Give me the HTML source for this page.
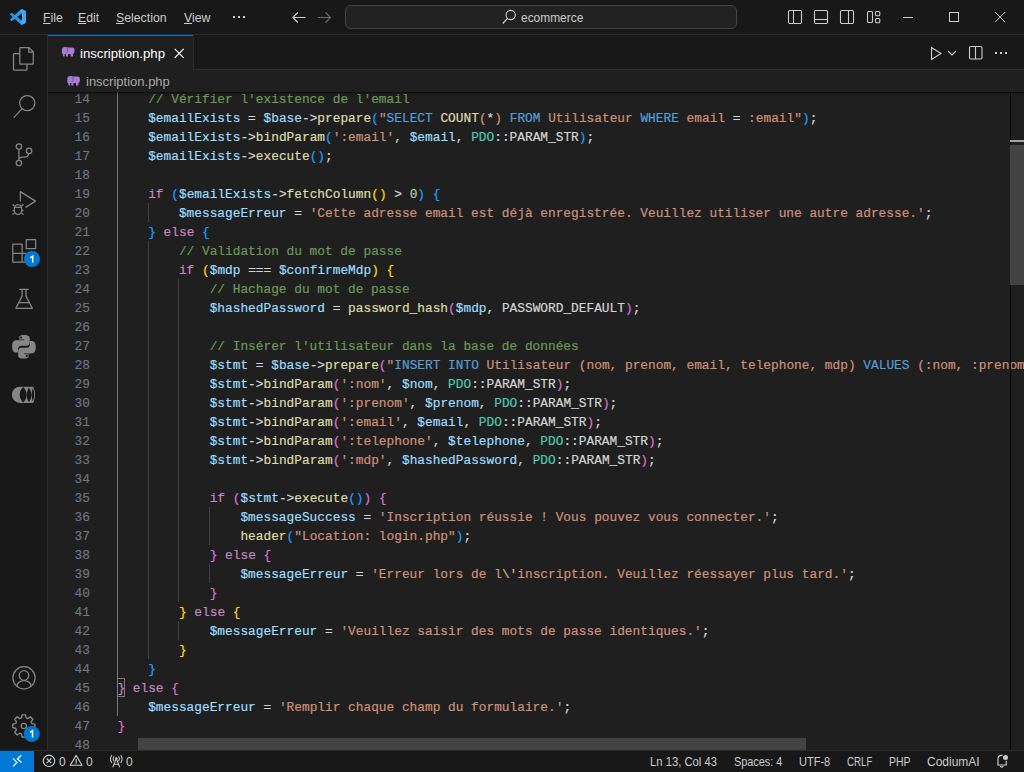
<!DOCTYPE html>
<html><head><meta charset="utf-8"><style>
*{margin:0;padding:0;box-sizing:border-box}
html,body{width:1024px;height:772px;overflow:hidden;background:#1f1f1f;font-family:"Liberation Sans",sans-serif}
.a{position:absolute}
.menu{position:absolute;top:11px;font-size:12.3px;color:#cccccc;line-height:14px;white-space:nowrap}
.menu i{font-style:normal;text-decoration:underline;text-underline-offset:1px}
.st{position:absolute;top:755px;font-size:12px;color:#cccccc;line-height:14px;white-space:nowrap}
.ln{position:absolute;left:0;width:42px;-webkit-text-stroke:0.15px currentColor;text-align:right;font-family:"Liberation Mono",monospace;font-size:12.82px;color:#6e7681;height:19px;line-height:19px;padding-top:1px}
.cl{position:absolute;white-space:pre;-webkit-text-stroke:0.2px currentColor;font-family:"Liberation Mono",monospace;font-size:12.82px;color:#d4d4d4;height:19px;line-height:19px;padding-top:1px}
.c{color:#6a9955}.v{color:#9cdcfe}.f{color:#dcdcaa}.k{color:#c586c0}.s{color:#ce9178}.q{color:#569cd6}.t{color:#4ec9b0}.n{color:#b5cea8}.e{color:#d7ba7d}
.b1{color:#ffd700}.b2{color:#da70d6}.b3{color:#179fff}
</style></head><body>
<div class="a" style="left:0;top:0;width:1024px;height:34px;background:#181818"></div>
<div class="a" style="left:0;top:34px;width:1024px;height:1px;background:#2b2b2b"></div>
<div class="a" style="left:0;top:35px;width:47px;height:715px;background:#181818"></div>
<div class="a" style="left:47px;top:35px;width:1px;height:715px;background:#2b2b2b"></div>
<div class="a" style="left:48px;top:35px;width:976px;height:34px;background:#181818"></div>
<div class="a" style="left:48px;top:69px;width:976px;height:1px;background:#2b2b2b"></div>
<div class="a" style="left:48px;top:35px;width:145px;height:35px;background:#1f1f1f"></div>
<div class="a" style="left:48px;top:35px;width:145px;height:1px;background:#0078d4"></div>
<div class="a" style="left:193px;top:35px;width:1px;height:35px;background:#2b2b2b"></div>
<div class="a" style="left:0;top:750px;width:1024px;height:22px;background:#181818"></div>
<div class="a" style="left:0;top:750px;width:1024px;height:1px;background:#2b2b2b"></div>
<div class="a" style="left:0;top:751px;width:34px;height:21px;background:#0078d4"></div>
<div class="a" style="left:48px;top:92px;width:976px;height:658px;overflow:hidden">
<div class="a" style="left:69.00px;top:-3px;width:1px;height:589px;background:#777777"></div>
<div class="a" style="left:69.00px;top:605px;width:1px;height:19px;background:#777777"></div>
<div class="a" style="left:100.00px;top:111px;width:1px;height:19px;background:#404040"></div>
<div class="a" style="left:100.00px;top:149px;width:1px;height:418px;background:#404040"></div>
<div class="a" style="left:130.00px;top:187px;width:1px;height:323px;background:#404040"></div>
<div class="a" style="left:130.00px;top:529px;width:1px;height:19px;background:#404040"></div>
<div class="a" style="left:161.00px;top:415px;width:1px;height:38px;background:#404040"></div>
<div class="a" style="left:161.00px;top:472px;width:1px;height:19px;background:#404040"></div>
<div class="a" style="left:69.40px;top:586px;width:8px;height:19px;border:1px solid #7a7a7a;background:rgba(0,100,0,0.1)"></div>
<div class="ln" style="top:-3px">14</div>
<div class="cl" style="left:69.40px;top:-3px">    <span class="c">// Vérifier l'existence de l'email</span></div>
<div class="ln" style="top:16px">15</div>
<div class="cl" style="left:69.40px;top:16px">    <span class="v">$emailExists</span> = <span class="v">$base</span>-&gt;<span class="f">prepare</span><span class="b3">(</span><span class="s">"</span><span class="q">SELECT</span><span class="s"> </span><span class="f">COUNT</span><span class="s">(</span>*<span class="s">)</span><span class="s"> </span><span class="q">FROM</span><span class="s"> Utilisateur </span><span class="q">WHERE</span><span class="s"> email </span>=<span class="s"> :email"</span><span class="b3">)</span>;</div>
<div class="ln" style="top:35px">16</div>
<div class="cl" style="left:69.40px;top:35px">    <span class="v">$emailExists</span>-&gt;<span class="f">bindParam</span><span class="b3">(</span><span class="s">':email'</span>, <span class="v">$email</span>, <span class="t">PDO</span>::PARAM_STR<span class="b3">)</span>;</div>
<div class="ln" style="top:54px">17</div>
<div class="cl" style="left:69.40px;top:54px">    <span class="v">$emailExists</span>-&gt;<span class="f">execute</span><span class="b3">()</span>;</div>
<div class="ln" style="top:73px">18</div>
<div class="ln" style="top:92px">19</div>
<div class="cl" style="left:69.40px;top:92px">    <span class="k">if</span> <span class="b3">(</span><span class="v">$emailExists</span>-&gt;<span class="f">fetchColumn</span><span class="b1">()</span> &gt; <span class="n">0</span><span class="b3">)</span> <span class="b3">{</span></div>
<div class="ln" style="top:111px">20</div>
<div class="cl" style="left:69.40px;top:111px">        <span class="v">$messageErreur</span> = <span class="s">'Cette adresse email est déjà enregistrée. Veuillez utiliser une autre adresse.'</span>;</div>
<div class="ln" style="top:130px">21</div>
<div class="cl" style="left:69.40px;top:130px">    <span class="b3">}</span> <span class="k">else</span> <span class="b3">{</span></div>
<div class="ln" style="top:149px">22</div>
<div class="cl" style="left:69.40px;top:149px">        <span class="c">// Validation du mot de passe</span></div>
<div class="ln" style="top:168px">23</div>
<div class="cl" style="left:69.40px;top:168px">        <span class="k">if</span> <span class="b1">(</span><span class="v">$mdp</span> === <span class="v">$confirmeMdp</span><span class="b1">)</span> <span class="b1">{</span></div>
<div class="ln" style="top:187px">24</div>
<div class="cl" style="left:69.40px;top:187px">            <span class="c">// Hachage du mot de passe</span></div>
<div class="ln" style="top:206px">25</div>
<div class="cl" style="left:69.40px;top:206px">            <span class="v">$hashedPassword</span> = <span class="f">password_hash</span><span class="b2">(</span><span class="v">$mdp</span>, PASSWORD_DEFAULT<span class="b2">)</span>;</div>
<div class="ln" style="top:225px">26</div>
<div class="ln" style="top:244px">27</div>
<div class="cl" style="left:69.40px;top:244px">            <span class="c">// Insérer l'utilisateur dans la base de données</span></div>
<div class="ln" style="top:263px">28</div>
<div class="cl" style="left:69.40px;top:263px">            <span class="v">$stmt</span> = <span class="v">$base</span>-&gt;<span class="f">prepare</span><span class="b2">(</span><span class="s">"</span><span class="q">INSERT</span><span class="s"> </span><span class="q">INTO</span><span class="s"> Utilisateur (nom, prenom, email, telephone, mdp) </span><span class="q">VALUES</span><span class="s"> (:nom, :prenom, :email, :telephone, :mdp)"</span><span class="b2">)</span>;</div>
<div class="ln" style="top:282px">29</div>
<div class="cl" style="left:69.40px;top:282px">            <span class="v">$stmt</span>-&gt;<span class="f">bindParam</span><span class="b2">(</span><span class="s">':nom'</span>, <span class="v">$nom</span>, <span class="t">PDO</span>::PARAM_STR<span class="b2">)</span>;</div>
<div class="ln" style="top:301px">30</div>
<div class="cl" style="left:69.40px;top:301px">            <span class="v">$stmt</span>-&gt;<span class="f">bindParam</span><span class="b2">(</span><span class="s">':prenom'</span>, <span class="v">$prenom</span>, <span class="t">PDO</span>::PARAM_STR<span class="b2">)</span>;</div>
<div class="ln" style="top:320px">31</div>
<div class="cl" style="left:69.40px;top:320px">            <span class="v">$stmt</span>-&gt;<span class="f">bindParam</span><span class="b2">(</span><span class="s">':email'</span>, <span class="v">$email</span>, <span class="t">PDO</span>::PARAM_STR<span class="b2">)</span>;</div>
<div class="ln" style="top:339px">32</div>
<div class="cl" style="left:69.40px;top:339px">            <span class="v">$stmt</span>-&gt;<span class="f">bindParam</span><span class="b2">(</span><span class="s">':telephone'</span>, <span class="v">$telephone</span>, <span class="t">PDO</span>::PARAM_STR<span class="b2">)</span>;</div>
<div class="ln" style="top:358px">33</div>
<div class="cl" style="left:69.40px;top:358px">            <span class="v">$stmt</span>-&gt;<span class="f">bindParam</span><span class="b2">(</span><span class="s">':mdp'</span>, <span class="v">$hashedPassword</span>, <span class="t">PDO</span>::PARAM_STR<span class="b2">)</span>;</div>
<div class="ln" style="top:377px">34</div>
<div class="ln" style="top:396px">35</div>
<div class="cl" style="left:69.40px;top:396px">            <span class="k">if</span> <span class="b2">(</span><span class="v">$stmt</span>-&gt;<span class="f">execute</span><span class="b3">()</span><span class="b2">)</span> <span class="b2">{</span></div>
<div class="ln" style="top:415px">36</div>
<div class="cl" style="left:69.40px;top:415px">                <span class="v">$messageSuccess</span> = <span class="s">'Inscription réussie ! Vous pouvez vous connecter.'</span>;</div>
<div class="ln" style="top:434px">37</div>
<div class="cl" style="left:69.40px;top:434px">                <span class="f">header</span><span class="b3">(</span><span class="s">"Location: login.php"</span><span class="b3">)</span>;</div>
<div class="ln" style="top:453px">38</div>
<div class="cl" style="left:69.40px;top:453px">            <span class="b2">}</span> <span class="k">else</span> <span class="b2">{</span></div>
<div class="ln" style="top:472px">39</div>
<div class="cl" style="left:69.40px;top:472px">                <span class="v">$messageErreur</span> = <span class="s">'Erreur lors de l</span><span class="e">\'</span><span class="s">inscription. Veuillez réessayer plus tard.'</span>;</div>
<div class="ln" style="top:491px">40</div>
<div class="cl" style="left:69.40px;top:491px">            <span class="b2">}</span></div>
<div class="ln" style="top:510px">41</div>
<div class="cl" style="left:69.40px;top:510px">        <span class="b1">}</span> <span class="k">else</span> <span class="b1">{</span></div>
<div class="ln" style="top:529px">42</div>
<div class="cl" style="left:69.40px;top:529px">            <span class="v">$messageErreur</span> = <span class="s">'Veuillez saisir des mots de passe identiques.'</span>;</div>
<div class="ln" style="top:548px">43</div>
<div class="cl" style="left:69.40px;top:548px">        <span class="b1">}</span></div>
<div class="ln" style="top:567px">44</div>
<div class="cl" style="left:69.40px;top:567px">    <span class="b3">}</span></div>
<div class="ln" style="top:586px">45</div>
<div class="cl" style="left:69.40px;top:586px"><span class="b2">}</span> <span class="k">else</span> <span class="b2">{</span></div>
<div class="ln" style="top:605px">46</div>
<div class="cl" style="left:69.40px;top:605px">    <span class="v">$messageErreur</span> = <span class="s">'Remplir chaque champ du formulaire.'</span>;</div>
<div class="ln" style="top:624px">47</div>
<div class="cl" style="left:69.40px;top:624px"><span class="b2">}</span></div>
<div class="ln" style="top:643px">48</div>
<div class="a" style="left:0;top:0;width:976px;height:1px;background:rgba(0,0,0,0.5)"></div><div class="a" style="left:0;top:1px;width:976px;height:1px;background:rgba(0,0,0,0.22)"></div><div class="a" style="left:0;top:2px;width:976px;height:2px;background:rgba(0,0,0,0.08)"></div>
<div class="a" style="left:962px;top:0;width:1px;height:658px;background:#010409"></div>
<div class="a" style="left:962px;top:53px;width:14px;height:140px;background:#434343"></div>
<div class="a" style="left:962px;top:48px;width:14px;height:2px;background:#a0a0a0"></div>
<div class="a" style="left:90px;top:646px;width:668px;height:12px;background:#434343"></div>
</div>
<div class="a" style="left:86px;top:74px;font-size:13px;color:#a9a9a9;line-height:16px">inscription.php</div>
<div class="a" style="left:80px;top:46px;font-size:13.2px;color:#ffffff;line-height:16px">inscription.php</div>
<div class="menu" style="left:43px"><i>F</i>ile</div>
<div class="menu" style="left:78px"><i>E</i>dit</div>
<div class="menu" style="left:116px"><i>S</i>election</div>
<div class="menu" style="left:184px"><i>V</i>iew</div>
<div class="a" style="left:345px;top:5px;width:392px;height:24px;border:1px solid #454545;border-radius:6px;background:#222222"></div>
<div class="a" style="left:521px;top:11px;font-size:12.5px;color:#cccccc;line-height:14px;transform-origin:0 0;transform:scaleX(0.954)">ecommerce</div>
<div class="st" style="left:59px">0</div>
<div class="st" style="left:86px">0</div>
<div class="st" style="left:126px">0</div>
<div class="st" style="left:650px;transform-origin:0 0;transform:scaleX(0.9375)">Ln 13, Col 43</div>
<div class="st" style="left:734px;transform-origin:0 0;transform:scaleX(0.9070)">Spaces: 4</div>
<div class="st" style="left:799px;transform-origin:0 0;transform:scaleX(0.9180)">UTF-8</div>
<div class="st" style="left:847px;transform-origin:0 0;transform:scaleX(0.8100)">CRLF</div>
<div class="st" style="left:889px;transform-origin:0 0;transform:scaleX(0.8720)">PHP</div>
<div class="st" style="left:927px;transform-origin:0 0;transform:scaleX(1.0000)">CodiumAI</div>
<svg class="a" style="left:0;top:0" width="1024" height="772" viewBox="0 0 1024 772"><defs><linearGradient id="lg" x1="0" x2="1" y1="0" y2="0"><stop offset="0" stop-color="#2a90dc"/><stop offset="0.7" stop-color="#2a98e8"/><stop offset="0.72" stop-color="#45acf4"/><stop offset="1" stop-color="#3aa4f0"/></linearGradient></defs><g transform="translate(10,9) scale(0.16)"><path fill="url(#lg)" d="M96.46 10.8L75.86.87a6.23 6.23 0 0 0-7.1 1.21L29.55 37.85 12.46 24.88a4.16 4.16 0 0 0-5.32.24L1.64 30.1a4.16 4.16 0 0 0 0 6.16L16.46 49.8 1.64 63.34a4.16 4.16 0 0 0 0 6.16l5.5 4.99a4.16 4.16 0 0 0 5.32.24l17.09-12.97 39.21 35.78a6.23 6.23 0 0 0 7.1 1.21l20.6-9.92A6.25 6.25 0 0 0 100 83.2V16.4a6.25 6.25 0 0 0-3.54-5.6zM75.02 72.7L45.28 50 75.02 27.3z"/></g><g fill="#cccccc"><rect x="233" y="16" width="2" height="2"/><rect x="238" y="16" width="2" height="2"/><rect x="243" y="16" width="2" height="2"/></g><path d="M305.5 17.5H292.8M297.8 12.5L292.8 17.5L297.8 22.5" fill="none" stroke="#cccccc" stroke-width="1.1"/><path d="M317.8 17.5H330.5M325.5 12.5L330.5 17.5L325.5 22.5" fill="none" stroke="#6b6b6b" stroke-width="1.1"/><circle cx="510.7" cy="15" r="4.6" fill="none" stroke="#cccccc" stroke-width="1.1"/><path d="M507.4 18.5L502.8 23.5" stroke="#cccccc" stroke-width="1.2"/><g fill="none" stroke="#cccccc" stroke-width="1.1"><rect x="788.5" y="10.5" width="13" height="13" rx="1.2"/><path d="M793.5 10.5V23.5"/><rect x="814.5" y="10.5" width="13" height="13" rx="1.2"/><path d="M814.5 19.5H827.5"/><rect x="840.5" y="10.5" width="13" height="13" rx="1.2"/><path d="M848.5 10.5V23.5"/><rect x="867.5" y="11.5" width="5" height="11" rx="1"/><rect x="875.5" y="11.5" width="4.3" height="4.2" rx="1"/><rect x="875.5" y="18.5" width="4.3" height="4.2" rx="1"/></g><path d="M903 17.5H913" stroke="#cccccc" stroke-width="1"/><rect x="949.5" y="12.5" width="9" height="9" fill="none" stroke="#cccccc" stroke-width="1"/><path d="M995 12L1005.2 22.2M1005.2 12L995 22.2" stroke="#cccccc" stroke-width="1"/><g transform="translate(0.0,0.0)" fill="#a77bd0"><path d="M64.6 47.1C63 47.1 61.9 48.3 61.9 50V52.6C61.9 53.4 62.3 54 62.9 54.2V55.8C62.9 56.3 63.3 56.6 63.8 56.6H64.6V54H65.9V56.6H68V54.1H70.6V56.6H73V54C74 53.6 74.5 52.8 74.5 51.6V49.8C74.5 48.4 73.5 47.6 72 47.6H68.2C67.4 47.3 66.3 47.1 64.6 47.1Z"/><path d="M67.6 47.7V51.4Q67.6 52.6 66.2 52.6" fill="none" stroke="#6f4a98" stroke-width="0.8"/></g><g transform="translate(5.4,28.9)" fill="#a77bd0"><path d="M64.6 47.1C63 47.1 61.9 48.3 61.9 50V52.6C61.9 53.4 62.3 54 62.9 54.2V55.8C62.9 56.3 63.3 56.6 63.8 56.6H64.6V54H65.9V56.6H68V54.1H70.6V56.6H73V54C74 53.6 74.5 52.8 74.5 51.6V49.8C74.5 48.4 73.5 47.6 72 47.6H68.2C67.4 47.3 66.3 47.1 64.6 47.1Z"/><path d="M67.6 47.7V51.4Q67.6 52.6 66.2 52.6" fill="none" stroke="#6f4a98" stroke-width="0.8"/></g><path d="M174.7 48.8L183.7 57.8M183.7 48.8L174.7 57.8" stroke="#ffffff" stroke-width="1.2"/><path d="M931.5 47.5L941 53.5L931.5 59.5Z" fill="none" stroke="#cccccc" stroke-width="1.1"/><path d="M948 51L952 55L956 51" fill="none" stroke="#cccccc" stroke-width="1.1"/><rect x="969.5" y="46.5" width="12.5" height="12.5" rx="1.2" fill="none" stroke="#cccccc" stroke-width="1.1"/><path d="M975.5 46.5V59" stroke="#cccccc" stroke-width="1.1"/><g fill="#cccccc"><rect x="995" y="52" width="2" height="2"/><rect x="1000" y="52" width="2" height="2"/><rect x="1005" y="52" width="2" height="2"/></g><g fill="none" stroke="#868686" stroke-width="1.25" stroke-linejoin="round"><path d="M20.6 47.6H29L33.3 51.9V63.4Q33.3 64.2 32.5 64.2H20.6Q19.8 64.2 19.8 63.4V48.4Q19.8 47.6 20.6 47.6Z M28.8 47.6V52.2H33.3"/><path d="M19.8 53.6H14.3Q13.5 53.6 13.5 54.4V69.4Q13.5 70.2 14.3 70.2H26.2Q27 70.2 27 69.4V64.2"/><circle cx="27.3" cy="103.1" r="7.6"/><path d="M21.9 108.8L13.8 117.6"/><circle cx="18.9" cy="146.6" r="2.7"/><circle cx="18.9" cy="163.1" r="2.7"/><circle cx="29.1" cy="150.9" r="2.7"/><path d="M18.9 149.3V160.4M18.9 160C18.9 158 20 157.1 22.5 157.1H25C27 157.1 28.5 155.5 28.5 153.6"/><path d="M20.4 201.5V191.6L35.5 201.1L25.6 207.4"/><ellipse cx="18" cy="209.5" rx="3.7" ry="5"/><path d="M14.3 207.4H21.7M12.5 210.5H14.3M21.7 210.5H23.5M12.5 204.5L14.5 206M23.5 204.5L21.5 206M12.5 214.5L14.5 213M23.5 214.5L21.5 213"/><path d="M12.8 244H22.1V262.2H12.8Z M12.8 253.3H26.5 M22.1 262.2H26.5"/><rect x="26.3" y="239.6" width="9.3" height="9.1"/><path d="M19.2 289.3H28.7 M22.1 289.3V296.1L15.9 308.3H32.3L26 296.1V289.3 M19 302.5H29"/><circle cx="24" cy="677.8" r="11.1"/><circle cx="24" cy="675.5" r="4.8"/><path d="M16.6 686.5C17.5 682.5 20.5 680.5 24 680.5C27.5 680.5 30.5 682.5 31.4 686.5"/></g><g fill="#868686"><path d="M23.8 335C19 335 19.3 337.1 19.3 337.1V339.4H24V340.2H16.3C16.3 340.2 12.1 339.7 12.1 346.3C12.1 352.8 15.7 352.6 15.7 352.6H18V349.4C18 349.4 17.9 345.8 21.6 345.8H26.3C26.3 345.8 29.7 345.9 29.7 342.5V337.9C29.7 337.9 30.2 335 23.8 335ZM21.2 336.5C21.8 336.5 22.2 337 22.2 337.5S21.8 338.5 21.2 338.5 20.2 338.1 20.2 337.5 20.6 336.5 21.2 336.5Z"/><path d="M24.1 358.6C28.9 358.6 28.6 356.5 28.6 356.5V354.2H23.9V353.4H31.6C31.6 353.4 35.8 353.9 35.8 347.3C35.8 340.8 32.2 341 32.2 341H29.9V344.2C29.9 344.2 30 347.8 26.3 347.8H21.6C21.6 347.8 18.2 347.7 18.2 351.1V355.7C18.2 355.7 17.7 358.6 24.1 358.6ZM26.7 357.1C26.1 357.1 25.7 356.6 25.7 356.1S26.1 355.1 26.7 355.1 27.7 355.5 27.7 356.1 27.3 357.1 26.7 357.1Z"/></g><path fill="#868686" d="M20 386.7H33.2Q37 394.8 33.2 402.9H20A8.1 8.1 0 0 1 20 386.7Z"/><g fill="#181818"><path d="M23.15 387.1A10.3 10.3 0 0 0 23.15 402.5A10.3 10.3 0 0 0 23.15 387.1Z"/><path d="M29.05 387.4A13.8 13.8 0 0 0 29.05 402.2A13.8 13.8 0 0 0 29.05 387.4Z"/><path d="M32.9 388A18.4 18.4 0 0 0 32.9 401.6A18.4 18.4 0 0 0 32.9 388Z"/></g><path d="M22.05 714.84 L25.55 714.84 L26.12 717.83 L27.87 718.55 L30.38 716.84 L32.86 719.32 L31.15 721.83 L31.87 723.58 L34.86 724.15 L34.86 727.65 L31.87 728.22 L31.15 729.97 L32.86 732.48 L30.38 734.96 L27.87 733.25 L26.12 733.97 L25.55 736.96 L22.05 736.96 L21.48 733.97 L19.73 733.25 L17.22 734.96 L14.74 732.48 L16.45 729.97 L15.73 728.22 L12.74 727.65 L12.74 724.15 L15.73 723.58 L16.45 721.83 L14.74 719.32 L17.22 716.84 L19.73 718.55 L21.48 717.83Z" fill="none" stroke="#868686" stroke-width="1.4" stroke-linejoin="round"/><circle cx="23.8" cy="725.9" r="2.6" fill="none" stroke="#868686" stroke-width="1.25"/><circle cx="32" cy="259" r="8" fill="#0078d4"/><path d="M30.3 257.8L32.7 256.2V262.6" fill="none" stroke="#fff" stroke-width="1.5"/><circle cx="31.8" cy="733.9" r="8" fill="#0078d4"/><path d="M30.1 732.4L32.5 730.7V737.6" fill="none" stroke="#fff" stroke-width="1.5"/><path d="M13 758.3L16.9 762.4L13.1 766.4M21.3 755.2L17.4 759L21.5 762.5" fill="none" stroke="#ffffff" stroke-width="1.2"/><circle cx="49" cy="760.8" r="5.7" fill="none" stroke="#cccccc" stroke-width="1.1"/><path d="M46.7 758.5L51.3 763.1M51.3 758.5L46.7 763.1" stroke="#cccccc" stroke-width="1.1"/><path d="M76.1 755.4L82 765.3H70.2Z M76.1 759V763.8" fill="none" stroke="#cccccc" stroke-width="1.1" stroke-linejoin="round"/><g fill="none" stroke="#cccccc" stroke-width="1.05"><path d="M116.3 758.5L112.8 767.2M116.3 758.5L119.8 767.2M113.8 764.3H118.8"/><path d="M111.9 755C110.3 757.3 110.3 760.7 111.9 763M120.7 755C122.3 757.3 122.3 760.7 120.7 763M114 756.2C113.1 757.6 113.1 759.8 114 761.2M118.6 756.2C119.5 757.6 119.5 759.8 118.6 761.2"/></g><circle cx="116.3" cy="758.4" r="1.2" fill="#cccccc"/><g fill="none" stroke="#cccccc" stroke-width="1.15"><path d="M998 765V758.6Q998 755.4 1001.4 755.4H1002.6M1006.2 760.8V765M997.2 765H1007M1000.2 766.2Q1001.8 768.3 1003.4 766.2"/></g><circle cx="1005.5" cy="757.5" r="2.5" fill="#cccccc"/></svg>
</body></html>
